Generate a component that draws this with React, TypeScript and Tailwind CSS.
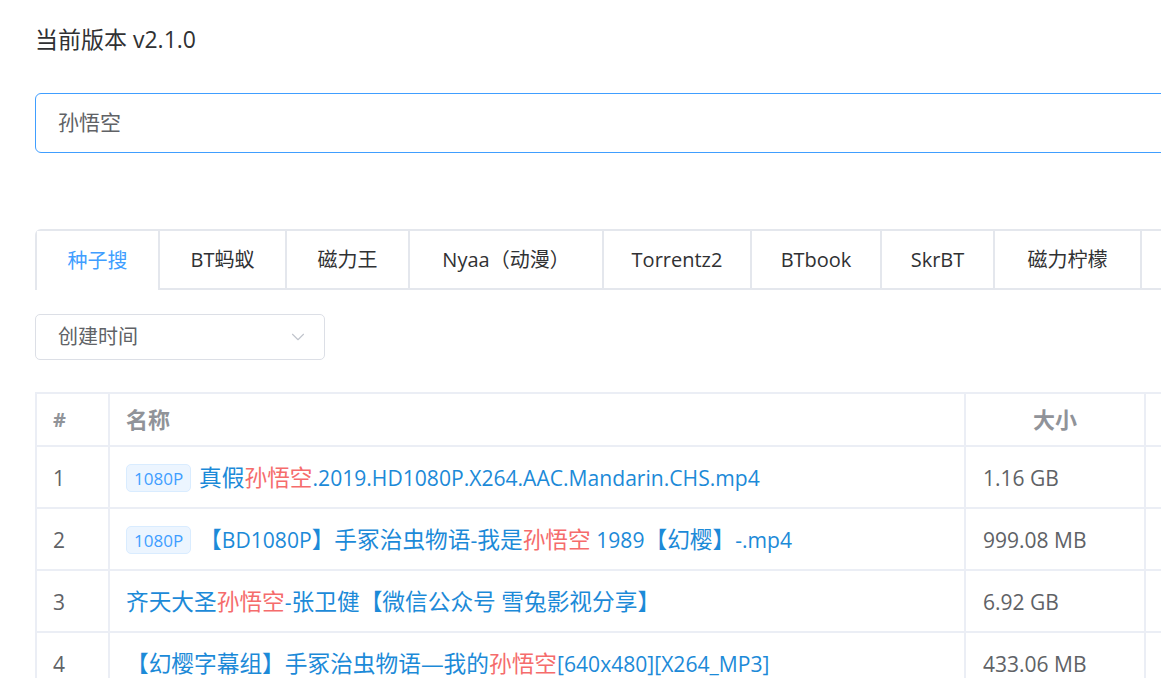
import { ChevronDown } from "lucide-react";

const font = { fontFamily: '"Open Sans", "Noto Sans CJK SC", sans-serif' };

const tabs = [
  { name: "种子搜", w: "w-[121px]" },
  { name: "BT蚂蚁", w: "w-[127px]" },
  { name: "磁力王", w: "w-[123px]" },
  { name: "Nyaa（动漫）", w: "w-[194px]" },
  { name: "Torrentz2", w: "w-[148px]" },
  { name: "BTbook", w: "w-[130px]" },
  { name: "SkrBT", w: "w-[113px]" },
  { name: "磁力柠檬", w: "w-[147px]" },
  { name: "", w: "w-[120px]" },
];

const rows = [
  { tag: true, pre: "真假", post: ".2019.HD1080P.X264.AAC.Mandarin.CHS.mp4", size: "1.16 GB" },
  { tag: true, pre: "【BD1080P】手冢治虫物语-我是", post: " 1989【幻樱】-.mp4", size: "999.08 MB" },
  { tag: false, pre: "齐天大圣", post: "-张卫健【微信公众号 雪兔影视分享】", size: "6.92 GB" },
  { tag: false, pre: "【幻樱字幕组】手冢治虫物语—我的", post: "[640x480][X264_MP3]", size: "433.06 MB" },
];

// CJK glyphs in the original render a touch wider than the latin ones
function Mixed({ text }: { text: string }) {
  const parts = text.match(/[\u3000-\u30ff\u4e00-\u9fff\uff00-\uffef—]+|[^\u3000-\u30ff\u4e00-\u9fff\uff00-\uffef—]+/g) || [];
  return (
    <>
      {parts.map((p, i) =>
        /[\u3000-\u30ff\u4e00-\u9fff\uff00-\uffef—]/.test(p) ? (
          <span key={i} className="text-[22.7px]">{p}</span>
        ) : (
          <span key={i} className="text-[21.1px]">{p}</span>
        )
      )}
    </>
  );
}

export default function App() {
  return (
    <div className="w-[1161px] h-[678px] overflow-hidden bg-white" style={font}>
      <div className="w-[1500px] pl-[35px] pt-[23px]">
        <div className="text-[23px] leading-[32px] text-[#303133]">当前版本 v2.1.0</div>

        <div className="mt-[38px] h-[60px] rounded-[6px] border-[1.5px] border-[#409eff] flex items-center pl-[22px] text-[21px] text-[#606266]">
          孙悟空
        </div>

        <div className="mt-[76px] flex border-b-[2px] border-[#e4e7ed]">
          <div className="flex border-[2px] border-b-0 border-[#e4e7ed] rounded-t-[6px]">
            {tabs.map((t, i) => (
              <div
                key={i}
                className={`${t.w} flex items-center justify-center text-[20px] ${
                  i === 0 ? "text-[#409eff] bg-white -mb-[2px] h-[59px]" : "h-[57px] text-[#303133] border-l-[2px] border-[#e4e7ed]"
                }`}
              >
                {t.name}
              </div>
            ))}
          </div>
        </div>

        <div className="mt-[24px] w-[290px] h-[46px] rounded-[5px] border-[1.5px] border-[#dcdfe6] flex items-center justify-between pl-[22px] pr-[15px] text-[20px] text-[#606266]">
          <span>创建时间</span>
          <ChevronDown className="w-[22px] h-[22px] text-[#c0c4cc]" strokeWidth={1.2} />
        </div>

        <table className="mt-[32px] border-collapse table-fixed w-[1300px] border-t-[2px] border-l-[2px] border-[#ebeef5]">
          <colgroup>
            <col className="w-[73px]" />
            <col className="w-[856px]" />
            <col className="w-[180px]" />
            <col className="w-[190px]" />
          </colgroup>
          <thead>
            <tr className="h-[53px] text-[#909399] font-bold">
              <th className="text-left pl-[16px] text-[20px] border-b-[2px] border-r-[2px] border-[#ebeef5]">#</th>
              <th className="text-left pl-[16px] text-[22px] border-b-[2px] border-r-[2px] border-[#ebeef5]">名称</th>
              <th className="text-center text-[22px] border-b-[2px] border-r-[2px] border-[#ebeef5]">大小</th>
              <th className="border-b-[2px] border-r-[2px] border-[#ebeef5]"></th>
            </tr>
          </thead>
          <tbody>
            {rows.map((r, i) => (
              <tr key={i} className="h-[62px] text-[#606266]">
                <td className="pl-[16px] pt-[3px] text-[21px] border-b-[2px] border-r-[2px] border-[#ebeef5]">{i + 1}</td>
                <td className="pl-[16px] pt-[3px] border-b-[2px] border-r-[2px] border-[#ebeef5] whitespace-nowrap">
                  <div className="flex items-center">
                    {r.tag && (
                      <span className="inline-flex items-center h-[28px] px-[7px] mr-[8px] rounded-[5px] border border-[#d9ecff] bg-[#ecf5ff] text-[#409eff] text-[17px]">
                        1080P
                      </span>
                    )}
                    <span className="text-[#1c8ad8] whitespace-pre">
                      <Mixed text={r.pre} />
                      <span className="text-[#f56c6c] text-[22.7px]">孙悟空</span>
                      <Mixed text={r.post} />
                    </span>
                  </div>
                </td>
                <td className="pl-[17px] pt-[3px] text-[21px] border-b-[2px] border-r-[2px] border-[#ebeef5]">{r.size}</td>
                <td className="border-b-[2px] border-r-[2px] border-[#ebeef5]"></td>
              </tr>
            ))}
          </tbody>
        </table>
      </div>
    </div>
  );
}
